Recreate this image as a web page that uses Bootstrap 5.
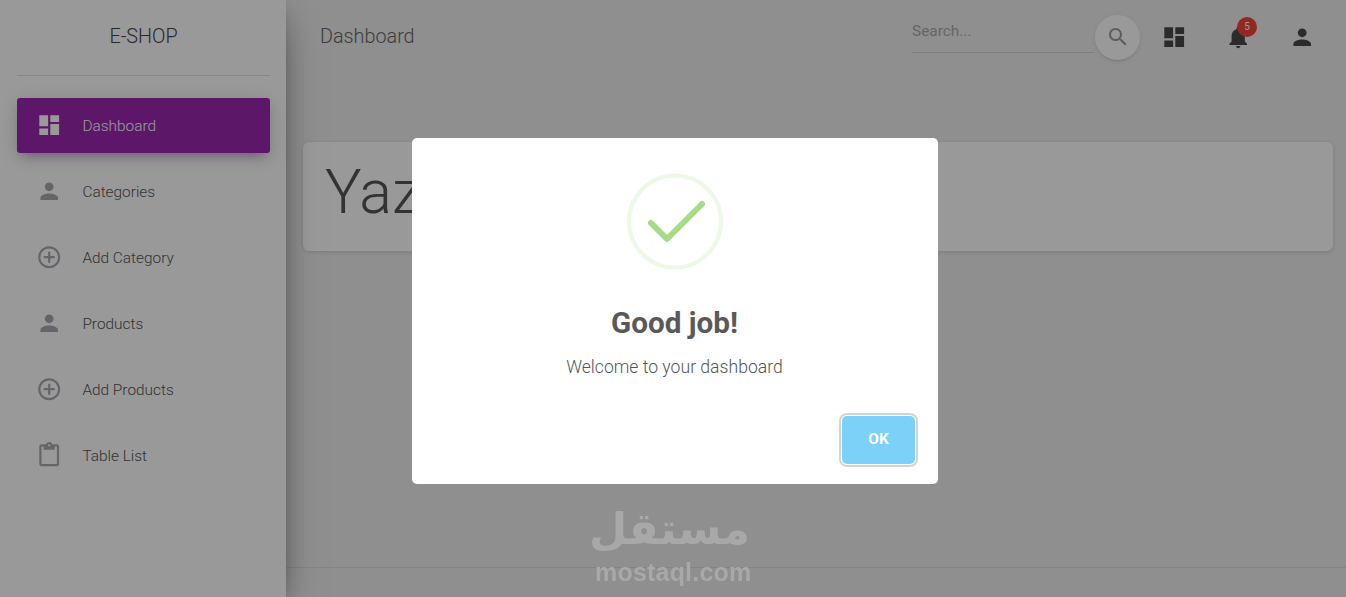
<!DOCTYPE html>
<html lang="en">
<head>
  <meta charset="UTF-8">
  <title>E-SHOP Dashboard</title>
  <meta name="viewport" content="width=device-width, initial-scale=1">
  <link href="https://cdn.jsdelivr.net/npm/bootstrap@5.3.3/dist/css/bootstrap.min.css" rel="stylesheet">
  <style>
    html, body { height: 100%; }
    body { background: #eee; font-family: Roboto, "Liberation Sans", sans-serif; font-weight: 300; color: #555; overflow: hidden; }
    .shop-side { width: 286px; background: #fff; box-shadow: 0 16px 38px -12px rgba(0,0,0,.56), 0 4px 25px 0 rgba(0,0,0,.12), 0 8px 10px -5px rgba(0,0,0,.2); z-index: 2; }
    .shop-brand { margin: 0 16px 0 17px; height: 76px; font-size: 19.8px; color: #444; border-bottom: 1px solid #e2e2e2; padding-bottom: 2px; }
    .shop-menu { padding: 22px 16px 0 17px; gap: 11px; }
    .shop-link { height: 55px; padding: 2px 0 0 19px; gap: 20px; border-radius: 3px; font-size: 15.4px; color: #555; text-decoration: none; }
    .shop-link svg { fill: #a9a9b0; flex: none; width: 26.4px; height: 26.4px; margin-top: -2px; }
    .shop-link.is-on { background: #9c27b0; color: #fff; box-shadow: 0 4px 20px 0 rgba(0,0,0,.14), 0 7px 10px -5px rgba(156,39,176,.4); }
    .shop-link.is-on svg { fill: #fff; }
    .shop-top { height: 74px; padding: 0 12px 0 34px; }
    .shop-title { font-size: 19.8px; color: #666; }
    .shop-search { width: 182px; height: 38px; margin-top: -6px; font-size: 15.4px; font-weight: 400; color: #aaa; border-bottom: 1px solid #d2d2d2; padding-top: 5px; }
    .shop-round { width: 45px; height: 45px; margin: 0 2px 0 1px; background: #fff; box-shadow: 0 2px 2px 0 rgba(153,153,153,.14), 0 3px 1px -2px rgba(153,153,153,.2), 0 1px 5px 0 rgba(153,153,153,.12); }
    .shop-round svg { fill: #9c9c9c; width: 24px; height: 24px; }
    .shop-icon { width: 64px; height: 45px; }
    .shop-icon svg { fill: #484848; width: 26.4px; height: 26.4px; }
    .shop-count { top: 2px; left: 31px; width: 20px; height: 20px; background: #f44336; color: #fff; font-size: 10px; font-weight: 400; }
    .shop-panel { margin: 68px 13px 0 17px; height: 109px; background: #fff; border-radius: 6px; box-shadow: 0 1px 4px 0 rgba(0,0,0,.14); padding: 0 22px; }
    .shop-panel h1 { font-size: 61px; font-weight: 300; line-height: 100px; margin: 0; color: #555; }
    .shop-foot { height: 30px; border-top: 1px solid #ddd; }
    .alert-veil { background: rgba(0,0,0,.4); z-index: 10; padding: 25px 0 0 4px; }
    .alert-box { width: 526px; height: 346px; background: #fff; border-radius: 5px; padding: 35px 23px 20px 22px; }
    .alert-box h2 { font-size: 29.7px; font-weight: 700; color: #595959; margin: 33px 0 0; line-height: 40px; text-align: center; }
    .alert-box p { font-size: 17.6px; font-weight: 300; color: #4f5756; margin: 11px 0 0; text-align: center; line-height: 26px; }
    .alert-ok { width: 73px; height: 48px; background: #7cd1f9; border: 0; border-radius: 5px; color: #fff; font-size: 15.4px; font-weight: 700; box-shadow: 0 0 0 1px #fff, 0 0 0 3px rgba(100,130,120,.33); }
    .wm-stamp { left: 595px; top: 500px; width: 155px; z-index: 11; color: #a8a8a8; text-align: center; pointer-events: none; }
    .wm-ar { font-family: "DejaVu Sans", sans-serif; font-size: 44px; font-weight: 700; line-height: 58px; }
    .wm-en { font-family: "Liberation Sans", sans-serif; font-size: 25px; font-weight: 700; line-height: 26px; margin-top: 1px; letter-spacing: .2px; }
  </style>
</head>
<body>
  <div class="d-flex h-100">
    <aside class="shop-side d-flex flex-column flex-shrink-0">
      <div class="shop-brand d-flex align-items-center justify-content-center">E-SHOP</div>
      <nav class="shop-menu d-flex flex-column">
        <a class="shop-link is-on d-flex align-items-center" href="#">
          <svg viewBox="0 0 24 24"><path d="M3 13h8V3H3v10zm0 8h8v-6H3v6zm10 0h8V11h-8v10zm0-18v6h8V3h-8z"/></svg>
          <span>Dashboard</span>
        </a>
        <a class="shop-link d-flex align-items-center" href="#">
          <svg viewBox="0 0 24 24"><path d="M12 12c2.21 0 4-1.79 4-4s-1.79-4-4-4-4 1.79-4 4 1.79 4 4 4zm0 2c-2.67 0-8 1.34-8 4v2h16v-2c0-2.66-5.33-4-8-4z"/></svg>
          <span>Categories</span>
        </a>
        <a class="shop-link d-flex align-items-center" href="#">
          <svg viewBox="0 0 24 24"><path d="M13 7h-2v4H7v2h4v4h2v-4h4v-2h-4V7zm-1-5C6.48 2 2 6.48 2 12s4.48 10 10 10 10-4.48 10-10S17.52 2 12 2zm0 18c-4.41 0-8-3.59-8-8s3.59-8 8-8 8 3.59 8 8-3.59 8-8 8z"/></svg>
          <span>Add Category</span>
        </a>
        <a class="shop-link d-flex align-items-center" href="#">
          <svg viewBox="0 0 24 24"><path d="M12 12c2.21 0 4-1.79 4-4s-1.79-4-4-4-4 1.79-4 4 1.79 4 4 4zm0 2c-2.67 0-8 1.34-8 4v2h16v-2c0-2.66-5.33-4-8-4z"/></svg>
          <span>Products</span>
        </a>
        <a class="shop-link d-flex align-items-center" href="#">
          <svg viewBox="0 0 24 24"><path d="M13 7h-2v4H7v2h4v4h2v-4h4v-2h-4V7zm-1-5C6.48 2 2 6.48 2 12s4.48 10 10 10 10-4.48 10-10S17.52 2 12 2zm0 18c-4.41 0-8-3.59-8-8s3.59-8 8-8 8 3.59 8 8-3.59 8-8 8z"/></svg>
          <span>Add Products</span>
        </a>
        <a class="shop-link d-flex align-items-center" href="#">
          <svg viewBox="0 0 24 24"><path d="M19 2h-4.18C14.4.84 13.3 0 12 0c-1.3 0-2.4.84-2.82 2H5c-1.1 0-2 .9-2 2v16c0 1.1.9 2 2 2h14c1.1 0 2-.9 2-2V4c0-1.1-.9-2-2-2zm-7 0c.55 0 1 .45 1 1s-.45 1-1 1-1-.45-1-1 .45-1 1-1zm7 18H5V4h2v3h10V4h2v16z"/></svg>
          <span>Table List</span>
        </a>
      </nav>
    </aside>

    <main class="d-flex flex-column flex-grow-1">
      <header class="shop-top d-flex align-items-center">
        <div class="shop-title">Dashboard</div>
        <div class="d-flex align-items-center ms-auto">
          <div class="shop-search">Search...</div>
          <div class="shop-round rounded-circle d-flex align-items-center justify-content-center">
            <svg viewBox="0 0 24 24"><path d="M15.5 14h-.79l-.28-.27C15.41 12.59 16 11.11 16 9.5 16 5.91 13.09 3 9.5 3S3 5.91 3 9.5 5.91 16 9.5 16c1.61 0 3.09-.59 4.23-1.57l.27.28v.79l5 4.99L20.49 19l-4.99-5zm-6 0C7.01 14 5 11.99 5 9.5S7.01 5 9.5 5 14 7.01 14 9.5 11.99 14 9.5 14z"/></svg>
          </div>
          <div class="shop-icon d-flex align-items-center justify-content-center">
            <svg viewBox="0 0 24 24"><path d="M3 13h8V3H3v10zm0 8h8v-6H3v6zm10 0h8V11h-8v10zm0-18v6h8V3h-8z"/></svg>
          </div>
          <div class="shop-icon position-relative d-flex align-items-center justify-content-center">
            <svg viewBox="0 0 24 24"><path d="M12 22c1.1 0 2-.9 2-2h-4c0 1.1.89 2 2 2zm6-6v-5c0-3.07-1.64-5.64-4.5-6.32V4c0-.83-.67-1.5-1.5-1.5s-1.5.67-1.5 1.5v.68C7.63 5.36 6 7.92 6 11v5l-2 2v1h16v-1l-2-2z"/></svg>
            <span class="shop-count position-absolute rounded-circle d-flex align-items-center justify-content-center">5</span>
          </div>
          <div class="shop-icon d-flex align-items-center justify-content-center">
            <svg viewBox="0 0 24 24"><path d="M12 12c2.21 0 4-1.79 4-4s-1.79-4-4-4-4 1.79-4 4 1.79 4 4 4zm0 2c-2.67 0-8 1.34-8 4v2h16v-2c0-2.66-5.33-4-8-4z"/></svg>
          </div>
        </div>
      </header>
      <section class="shop-panel"><h1>Yazan</h1></section>
      <footer class="shop-foot mt-auto"></footer>
    </main>
  </div>

  <div class="alert-veil position-fixed top-0 start-0 w-100 h-100 d-flex align-items-center justify-content-center">
    <div class="alert-box d-flex flex-column">
      <div class="text-center">
        <svg width="96" height="97" viewBox="0 0 96 97">
          <circle cx="48" cy="48.5" r="46" fill="none" stroke="#a5dc86" stroke-opacity=".2" stroke-width="4"/>
          <path d="M24 50L40 66L75 31" fill="none" stroke="#a5dc86" stroke-width="6" stroke-linecap="round" stroke-linejoin="round"/>
        </svg>
      </div>
      <h2>Good job!</h2>
      <p>Welcome to your dashboard</p>
      <div class="d-flex justify-content-end mt-auto">
        <button class="alert-ok" type="button">OK</button>
      </div>
    </div>
  </div>

  <div class="wm-stamp position-fixed">
    <div class="wm-ar" lang="ar" dir="rtl">مستقل</div>
    <div class="wm-en">mostaql.com</div>
  </div>

  <script src="https://cdn.jsdelivr.net/npm/bootstrap@5.3.3/dist/js/bootstrap.bundle.min.js"></script>
</body>
</html>
